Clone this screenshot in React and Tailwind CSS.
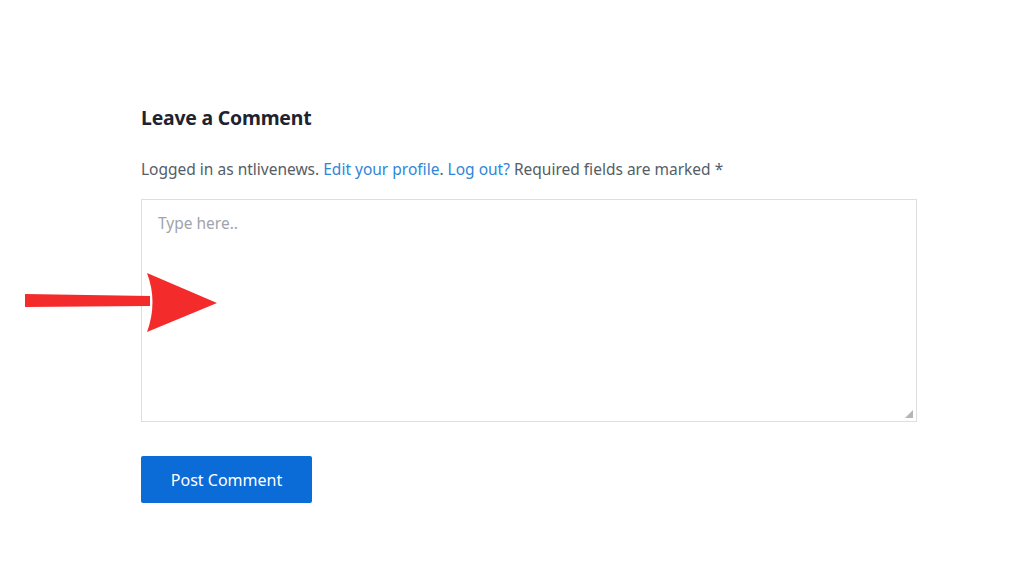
import React from "react";

export default function App() {
  return (
    <div className="relative w-[1024px] h-[576px] bg-white overflow-hidden" style={{ fontFamily: '"Noto Sans", "Open Sans", sans-serif' }}>
      <div className="ml-[141px] w-[776px] pt-[104px]">
        <h3 className="text-[19.4px] leading-[28px] font-bold text-[#1e2330] tracking-[-0.2px]">Leave a Comment</h3>
        <p className="mt-[25px] text-[15.5px] leading-[24px] text-[#555d66]">
          Logged in as ntlivenews. <span className="text-[#2f86d8]">Edit your profile</span>. <span className="text-[#2f86d8]">Log out?</span> Required fields are marked *
        </p>
        <div className="relative mt-[18px] h-[223px] border border-[#dddde2] bg-white">
          <div className="pl-[16px] pt-[11px] text-[15.5px] leading-[24px] text-[#a0a4ab]">Type here..</div>
          <svg className="absolute right-[2px] bottom-[2px]" width="10" height="10" viewBox="0 0 10 10">
            <path d="M9 1 L1 9 H9 Z" fill="#b5b5b5" />
          </svg>
        </div>
        <button className="mt-[34px] w-[171px] h-[47px] bg-[#0b6cd8] rounded-[2px] text-white text-[16px] leading-[24px]">Post Comment</button>
      </div>
      <svg className="absolute left-0 top-0" width="240" height="340" viewBox="0 0 240 340">
        <path d="M25 294 L150 296 L150 306 L25 307 Z" fill="#f32b2b" />
        <path d="M147 273 L217 303 L147 332 Q158 302 147 273 Z" fill="#f32b2b" />
      </svg>
    </div>
  );
}
